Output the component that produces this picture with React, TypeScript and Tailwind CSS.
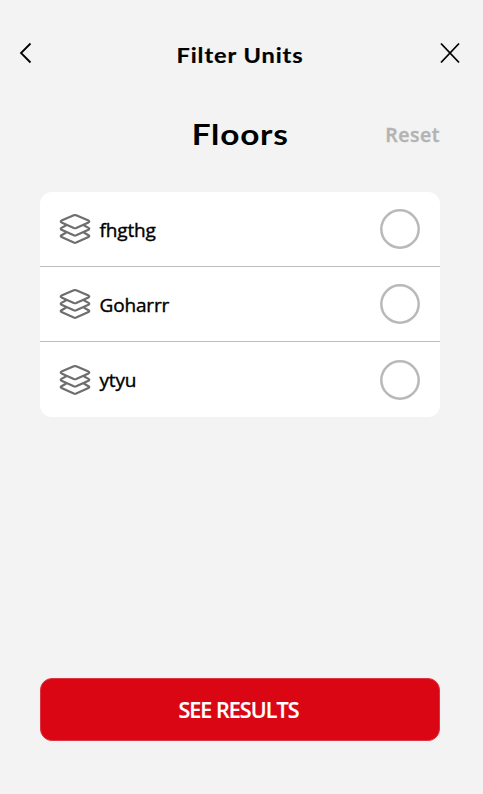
import React from "react";

const floors = ["fhgthg", "Goharrr", "ytyu"];

function LayersIcon() {
  return (
    <svg width="32" height="32" viewBox="0 0 32 32" fill="none" stroke="#6e6e6e" strokeWidth="2.2" strokeLinejoin="round" strokeLinecap="round">
      <path d="M14.8 2.3Q16 1.8 17.2 2.3L29.5 7.6Q31 8.5 29.5 9.4L17.2 15Q16 15.5 14.8 15L2.5 9.4Q1 8.5 2.5 7.6Z" />
      <path d="M6.8 12.5L2.5 14.9Q1 15.8 2.5 16.7L14.8 22.3Q16 22.8 17.2 22.3L29.5 16.7Q31 15.8 29.5 14.9L25.2 12.5" />
      <path d="M6.8 19.8L2.5 22.2Q1 23.1 2.5 24L14.8 29.6Q16 30.1 17.2 29.6L29.5 24Q31 23.1 29.5 22.2L25.2 19.8" />
    </svg>
  );
}

export default function App() {
  return (
    <main className="flex h-[794px] w-[483px] flex-col bg-[#f3f3f3] font-['Open_Sans','Noto_Sans',sans-serif] text-black">
      <header className="mt-[37px] flex h-8 items-center justify-between pr-[21px] pl-[17px]">
        <button aria-label="Back" className="w-5">
          <svg width="16" height="24" viewBox="0 0 16 24" fill="none" stroke="currentColor" strokeWidth="1.8">
            <path d="M13.5 2.5L4 12L13.5 21.5" />
          </svg>
        </button>
        <h1 className="scale-x-112 pt-1 pl-1 font-['Lato',sans-serif] text-[21px] leading-7 font-bold tracking-[0.85px] [-webkit-text-stroke:0.2px_black]">Filter Units</h1>
        <button aria-label="Close">
          <svg width="24" height="24" viewBox="0 0 24 24" fill="none" stroke="currentColor" strokeWidth="1.8">
            <path d="M3 2.5L21 21.5M21 2.5L3 21.5" />
          </svg>
        </button>
      </header>

      <div className="mx-10 mt-[46px] grid h-10 w-[400px] grid-cols-[1fr_auto_1fr] items-center">
        <h2 className="col-start-2 scale-x-115 pb-0.5 font-['Lato',sans-serif] text-[29px] leading-[38px] font-bold tracking-[0.7px]">Floors</h2>
        <button className="justify-self-end text-[19.5px] leading-6 font-semibold tracking-[0.5px] text-[#b3b3b3] [-webkit-text-stroke:0.4px_#b3b3b3]">Reset</button>
      </div>

      <ul className="mx-10 mt-[37px] h-[225px] w-[400px] rounded-xl bg-white">
        {floors.map((floor) => (
          <li key={floor} className="flex h-[75px] items-center border-b border-[#bbbbbb] pr-5 pl-[19px] last:border-b-0">
            <LayersIcon />
            <span className="ml-[8.5px] flex-1 pt-0.5 text-[19px] font-medium tracking-[-0.15px] [-webkit-text-stroke:0.4px_black]">{floor}</span>
            <span className="flex size-10">
              <svg width="40" height="40" fill="none" stroke="#b9b9b9" strokeWidth="2.5">
                <circle cx="20" cy="20" r="18.7" />
              </svg>
            </span>
          </li>
        ))}
      </ul>

      <button className="mx-10 mt-[261px] h-[63px] w-[400px] rounded-xl border border-[#df3341] bg-[#da0613] pt-0.5 pr-[3px] text-[21.5px] font-semibold tracking-[-0.95px] text-white [-webkit-text-stroke:0.2px_white]">
        SEE RESULTS
      </button>
    </main>
  );
}
